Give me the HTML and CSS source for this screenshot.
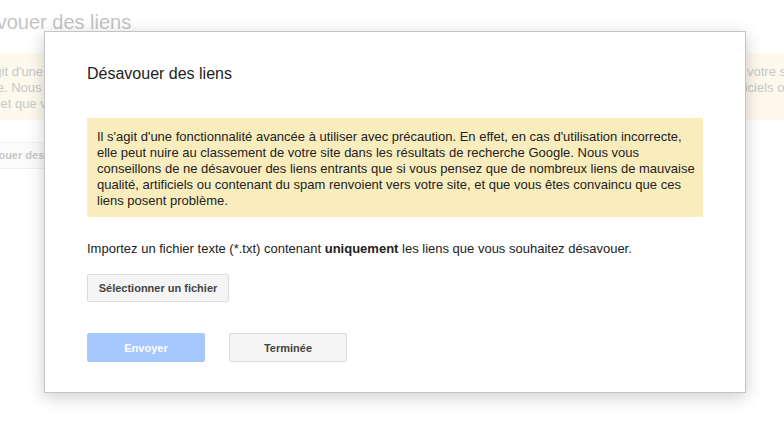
FILE: index.html
```html
<!DOCTYPE html>
<html lang="fr">
<head>
  <meta charset="UTF-8">
  <title>Désavouer des liens</title>
  <link rel="stylesheet" href="styles.css">
</head>
<body>
  <div class="page">
    <h1 class="page-title">Désavouer des liens</h1>
    <div class="page-warning">
      <div class="line"><span class="l1">Il s'agit d'une</span><span>votre site</span></div>
      <div class="line"><span class="l2">Google. Nous</span><span class="r2">artificiels ou</span></div>
      <div class="line"><span class="l3">site, et que vous</span><span></span></div>
    </div>
    <div class="page-btn">Désavouer des liens</div>
  </div>

  <div class="dialog">
    <h2 class="dialog-title">Désavouer des liens</h2>
    <div class="warning">
      Il s'agit d'une fonctionnalité avancée à utiliser avec précaution. En effet, en cas d'utilisation incorrecte,<br>
      elle peut nuire au classement de votre site dans les résultats de recherche Google. Nous vous<br>
      conseillons de ne désavouer des liens entrants que si vous pensez que de nombreux liens de mauvaise<br>
      qualité, artificiels ou contenant du spam renvoient vers votre site, et que vous êtes convaincu que ces<br>
      liens posent problème.
    </div>
    <p class="intro">Importez un fichier texte (*.txt) contenant <b>uniquement</b> les liens que vous souhaitez désavouer.</p>
    <button class="btn btn-file">Sélectionner un fichier</button>
    <div class="actions">
      <button class="btn btn-primary" disabled>Envoyer</button>
      <button class="btn">Terminée</button>
    </div>
  </div>
</body>
</html>
```

FILE: styles.css
```css
* {
  margin: 0;
  padding: 0;
  box-sizing: border-box;
}

body {
  width: 784px;
  height: 433px;
  overflow: hidden;
  background: #fff;
  font-family: Arial, "Liberation Sans", sans-serif;
  color: #222;
  position: relative;
}

/* faded page behind the dialog */
.page {
  padding-top: 8px;
}

.page-title {
  margin-left: -50px;
  font-size: 20px;
  font-weight: normal;
  line-height: 28px;
  color: #c4c4c4;
  white-space: nowrap;
}

.page-warning {
  margin-top: 17px;
  width: 784px;
  height: 67px;
  padding-top: 11px;
  background: #fdf9ed;
  color: #c8c8c8;
  font-size: 13px;
  line-height: 16px;
  white-space: nowrap;
}

.page-warning .line {
  display: grid;
  grid-template-columns: 747px 1fr;
  overflow: hidden;
}

.page-warning .l1 { margin-left: -32px; }
.page-warning .l2 { margin-left: -38px; }
.page-warning .l3 { margin-left: -27px; }
.page-warning .r2 { margin-left: -24px; }

.page-btn {
  margin-top: 22px;
  margin-left: -45px;
  width: 170px;
  height: 27px;
  line-height: 25px;
  padding-left: 10px;
  font-size: 11px;
  font-weight: bold;
  color: #c8c8c8;
  background: #fbfbfb;
  border: 1px solid #efefef;
  white-space: nowrap;
}

/* dialog */
.dialog {
  position: absolute;
  left: 44px;
  top: 31px;
  width: 702px;
  height: 362px;
  padding: 32px 42px 30px;
  background: #fff;
  border: 1px solid #c5c5c5;
  box-shadow: 0 4px 16px rgba(0, 0, 0, 0.2);
}

.dialog-title {
  font-size: 16px;
  font-weight: normal;
  line-height: 20px;
  color: #222;
}

.warning {
  margin-top: 34px;
  width: 616px;
  padding: 11px 10px 8px;
  background: #f9edbe;
  font-size: 13px;
  line-height: 16px;
  color: #222;
  white-space: nowrap;
}

.intro {
  margin-top: 24px;
  font-size: 13px;
  line-height: 16px;
  color: #222;
}

.btn {
  font-family: Arial, "Liberation Sans", sans-serif;
  font-size: 11px;
  font-weight: bold;
  color: #444;
  background: #f5f5f5;
  border: 1px solid #dcdcdc;
  border-radius: 2px;
  height: 29px;
  width: 118px;
}

.btn-file {
  display: block;
  margin-top: 17px;
  width: 142px;
  height: 28px;
}

.actions {
  display: flex;
  gap: 24px;
  margin-top: 31px;
}

.btn-primary {
  background: #a6c8ff;
  border-color: #a6c8ff;
  color: #fff;
}
```
